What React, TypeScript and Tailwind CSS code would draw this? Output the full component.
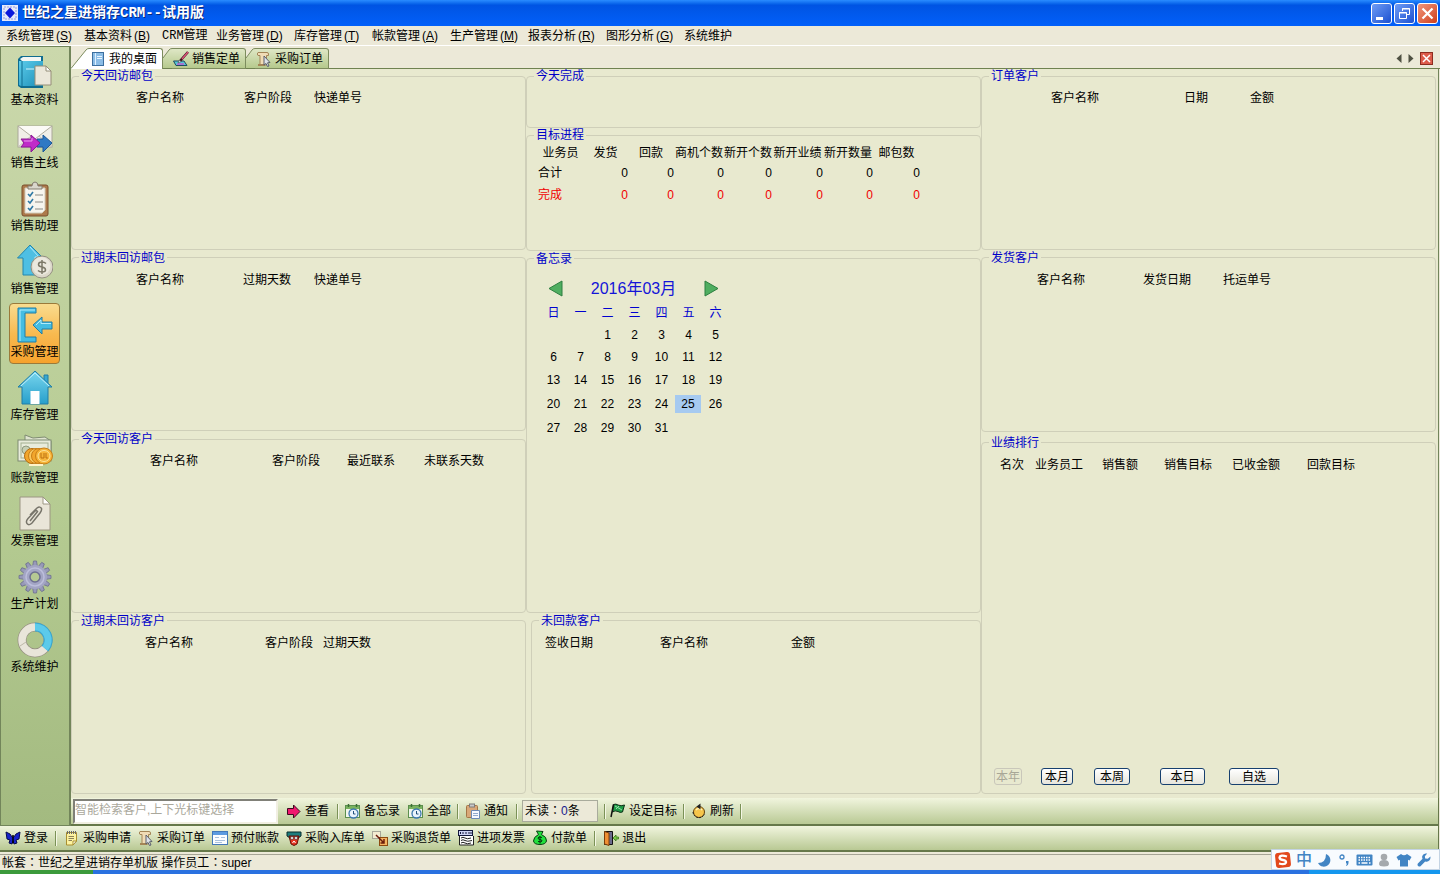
import React from "react";

type IconFn = () => React.ReactElement;

/* ---------- sidebar icons (36 x 36) ---------- */

const BookIcon: IconFn = () => (
  <svg viewBox="0 0 36 36" className="h-9 w-9" aria-hidden="true">
    <defs>
      <linearGradient id="bk" x1="0" y1="0" x2="1" y2="1">
        <stop offset="0" stopColor="#5ccbea" />
        <stop offset="1" stopColor="#1c8fb8" />
      </linearGradient>
    </defs>
    <path d="M1 4 L4 1 H26 V33 H4 L1 31 Z" fill="#0f6c8f" />
    <path d="M3 4 L6 2 H24 V6 H5 Z" fill="#f4f6f4" />
    <path d="M2 6 H26 V31 H4 L2 30 Z" fill="url(#bk)" />
    <path d="M5 6 V32" stroke="#0f6c8f" strokeWidth="1" />
    <path d="M9 14 H17" stroke="#d6f4fb" strokeWidth="1" />
    <path d="M18 11 H29 L34 16 V30 H18 Z" fill="#ebe7da" stroke="#958e79" strokeWidth="1" />
    <path d="M29 11 V16 H34 Z" fill="#fff" stroke="#958e79" strokeWidth="1" />
  </svg>
);

const MailIcon: IconFn = () => (
  <svg viewBox="0 0 36 36" className="h-9 w-9" aria-hidden="true">
    <rect x="1" y="8" width="34" height="21" fill="#f1efe8" stroke="#aaa79a" />
    <path d="M1 8 L18 21 L35 8" fill="#fbfaf6" stroke="#b0ad9f" />
    <path d="M1 29 L14 18 M35 29 L22 18" stroke="#c4c1b4" fill="none" />
    <path d="M20 21 H26 V17 L35 25 L26 34 V29 H20 Z" fill="#2e79c4" stroke="#1b5796" />
    <path d="M4 21 H14 V17 L23 25 L14 34 V29 H4 L7 25 Z" fill="#c02bc9" stroke="#8a1a93" />
    <path d="M7 23 H15 V20" stroke="#ea9cee" fill="none" />
  </svg>
);

const ChecklistIcon: IconFn = () => (
  <svg viewBox="0 0 36 36" className="h-9 w-9" aria-hidden="true">
    <rect x="5" y="4" width="26" height="31" rx="2" fill="#ad7a4c" stroke="#7a4f2c" />
    <path d="M8 7 H28 V29 L25 32 H8 Z" fill="#f7f5ee" stroke="#d3cdbb" />
    <path d="M11 8 V5 H15 Q15 1 18 1 Q21 1 21 5 H25 V8 Z" fill="#d9d6cc" stroke="#837e70" />
    <path d="M11 13 l2 2 l3 -4 M11 20 l2 2 l3 -4 M11 27 l2 2 l3 -4" stroke="#2e78a4" strokeWidth="1.6" fill="none" />
    <path d="M18 14 H26 M18 21 H26 M18 28 H26" stroke="#8b8b86" strokeWidth="1" />
  </svg>
);

const SalesIcon: IconFn = () => (
  <svg viewBox="0 0 36 36" className="h-9 w-9" aria-hidden="true">
    <path d="M13 1 L26 14 H20 V31 H6 V14 H0.5 Z" fill="#4ebfe3" stroke="#2386ae" />
    <path d="M13 3 L22 13 H18 V18" stroke="#b6ebf9" fill="none" />
    <circle cx="25" cy="23" r="11" fill="#dcd8ca" stroke="#938f80" />
    <circle cx="24.5" cy="22" r="9" fill="#ebe8de" />
    <path d="M29 19.500 Q27.500 18 25 18 Q21.500 18 21.500 20.500 Q21.500 22.500 25 23 Q28.500 23.500 28.500 26 Q28.500 28 25 28 Q22.500 28 21 26.500 M25 16 V30" fill="none" stroke="#7c7868" strokeWidth="1.500" />
  </svg>
);

const PurchaseIcon: IconFn = () => (
  <svg viewBox="0 0 36 36" className="h-9 w-9" aria-hidden="true">
    <path d="M1 1 H19 V6 H8 V30 H19 V35 H1 Z" fill="#45bde2" stroke="#207da6" />
    <path d="M3 34 V3 H18" stroke="#b4ecfa" fill="none" />
    <path d="M16 18 L25 10 V15 H35 V22 H25 V27 Z" fill="#45bde2" stroke="#207da6" />
    <path d="M19 18 L24 13 V16.500 H34" stroke="#b4ecfa" fill="none" />
  </svg>
);

const HouseIcon: IconFn = () => (
  <svg viewBox="0 0 36 36" className="h-9 w-9" aria-hidden="true">
    <defs>
      <linearGradient id="hs" x1="0" y1="0" x2="0" y2="1">
        <stop offset="0" stopColor="#79d6ee" />
        <stop offset="1" stopColor="#279fcb" />
      </linearGradient>
    </defs>
    <path d="M27 5 H31 V13 H27 Z" fill="#38a9d1" stroke="#207da6" />
    <path d="M18 1 L35 17 H31 V34 H5 V17 H1 Z" fill="url(#hs)" stroke="#207da6" />
    <path d="M4 16 L18 3 L32 16" stroke="#c1f0fb" fill="none" />
    <rect x="13.500" y="21" width="9" height="13" fill="#fff" />
  </svg>
);

const MoneyIcon: IconFn = () => (
  <svg viewBox="0 0 36 36" className="h-9 w-9" aria-hidden="true">
    <path d="M8 2 L16 5 L28 4 L34 8 V20 L8 18 Z" fill="#dfe4d0" stroke="#7f8b72" />
    <rect x="1" y="7" width="33" height="21" fill="#e8ecdb" stroke="#7f8b72" />
    <rect x="4" y="10" width="27" height="15" fill="none" stroke="#a3af92" />
    <circle cx="9" cy="17" r="4" fill="#c6cfb4" stroke="#8e9b80" />
    <circle cx="15" cy="23" r="7.500" fill="#f2a62c" stroke="#b76d0e" />
    <circle cx="19" cy="23" r="7.500" fill="#f8c860" stroke="#c87e16" />
    <circle cx="22" cy="23" r="7.500" fill="#f2a62c" stroke="#c87e16" />
    <ellipse cx="27" cy="23" rx="8.500" ry="8" fill="#f6b53a" stroke="#c87e16" />
    <ellipse cx="27" cy="23" rx="6" ry="5.500" fill="none" stroke="#fde39a" />
    <path d="M24 20 V25 H27 V20 M29 20 V25 H31" stroke="#bd7010" fill="none" />
    <path d="M12 32 H26" stroke="#fff3c8" strokeWidth="2" />
  </svg>
);

const InvoiceIcon: IconFn = () => (
  <svg viewBox="0 0 36 36" className="h-9 w-9" aria-hidden="true">
    <path d="M3 1 H26 L33 8 V34 H3 Z" fill="#e9e5d8" stroke="#9c9682" />
    <path d="M26 1 V8 H33 Z" fill="#fff" stroke="#9c9682" />
    <path d="M13 19 L20 12 Q23 10 24.500 12.500 Q25 14 23 17 L15 27 Q12 30 10 27.500 Q8.500 25.500 11 22.500 L18 15 Q20 14 20.500 15.500 L13 25" fill="none" stroke="#77746a" strokeWidth="1.500" />
  </svg>
);

const GEAR_ANGLES = [0, 30, 60, 90, 120, 150, 180, 210, 240, 270, 300, 330];

const GearIcon: IconFn = () => (
  <svg viewBox="0 0 36 36" className="h-9 w-9" aria-hidden="true">
    {GEAR_ANGLES.map((a) => (
      <path key={a} d="M15.500 8 L16.500 2 H19.500 L20.500 8 Z" fill="#9799b8" stroke="#6d6f90" strokeWidth="0.800" transform={`rotate(${a} 18 18)`} />
    ))}
    <circle cx="18" cy="18" r="12" fill="#a3a5c4" />
    <circle cx="18" cy="18" r="9" fill="none" stroke="#bcbedb" strokeWidth="1.500" />
    <circle cx="18" cy="18" r="5" fill="#b5c893" stroke="#6d6f90" strokeWidth="1.500" />
  </svg>
);

const RingIcon: IconFn = () => (
  <svg viewBox="0 0 36 36" className="h-9 w-9" aria-hidden="true">
    <circle cx="18" cy="18" r="13" fill="none" stroke="#979283" strokeWidth="9" />
    <circle cx="18" cy="18" r="13" fill="none" stroke="#e9e5da" strokeWidth="7.500" />
    <path d="M18 5 A13 13 0 0 1 28 26.500" fill="none" stroke="#37a7d0" strokeWidth="9" />
    <path d="M18 5 A13 13 0 0 1 28 26.500" fill="none" stroke="#5ccaea" strokeWidth="7" />
    <path d="M3 24 L9 20" stroke="#bdb8a8" />
  </svg>
);

/* ---------- toolbar icons (16 x 16) ---------- */

const cls16 = "h-4 w-4 shrink-0";

const ArrowRight16: IconFn = () => (
  <svg viewBox="0 0 16 16" className={cls16} aria-hidden="true">
    <path d="M1.500 5.500 H7.500 V2 L14 8.500 L7.500 15 V11.500 H1.500 Z" fill="#f0186e" stroke="#3c0a20" />
  </svg>
);
const CalClock16: IconFn = () => (
  <svg viewBox="0 0 16 16" className={cls16} aria-hidden="true">
    <rect x="0.500" y="2.500" width="14" height="12" fill="#f3f7ee" stroke="#5c8f4e" />
    <rect x="1" y="3" width="13" height="3" fill="#7ab35f" />
    <path d="M3.500 1 V4 M11.500 1 V4" stroke="#3b6e33" strokeWidth="1.500" />
    <circle cx="8.500" cy="10.500" r="4.500" fill="#eaf4fd" stroke="#3b76ad" strokeWidth="1.300" />
    <path d="M8.500 8 V11 H10.500" stroke="#23507c" fill="none" />
  </svg>
);
const Paste16: IconFn = () => (
  <svg viewBox="0 0 16 16" className={cls16} aria-hidden="true">
    <rect x="1.500" y="2.500" width="11" height="12" rx="1" fill="#d9a878" stroke="#a37546" />
    <rect x="4.500" y="1" width="5" height="3" fill="#c9c9c9" stroke="#7d7d7d" />
    <path d="M6.500 7.500 H14.500 V15.500 H6.500 Z" fill="#f5f9ff" stroke="#6b8ab5" />
    <path d="M8 10.500 H13 M8 12.500 H13" stroke="#8fa9cc" />
  </svg>
);
const Flag16: IconFn = () => (
  <svg viewBox="0 0 16 16" className={cls16} aria-hidden="true">
    <path d="M3.500 1.500 Q6 0.500 8 2 Q11 3.500 14.500 2 L12.500 9 Q10 10 8 8.500 Q5 7 2.500 9 Z" fill="#1f9c46" stroke="#0a2e14" />
    <path d="M5 3 L12 7 M6 6 L9 3" stroke="#8fe0a5" />
    <path d="M3.500 1.500 L1 14" stroke="#111" strokeWidth="1.500" />
  </svg>
);
const Refresh16: IconFn = () => (
  <svg viewBox="0 0 16 16" className={cls16} aria-hidden="true">
    <circle cx="8" cy="9" r="5.500" fill="#f5c54b" stroke="#66420a" />
    <path d="M5 7 Q8 4 11 7" stroke="#fff2b8" fill="none" strokeWidth="1.500" />
    <path d="M5.500 3.500 L9.500 0.500 V6.500 Z" fill="#222" />
    <path d="M2 9 A6 6 0 0 0 13.500 11" fill="none" stroke="#222" strokeDasharray="2 1" />
  </svg>
);
const Butterfly16: IconFn = () => (
  <svg viewBox="0 0 16 16" className={cls16} aria-hidden="true">
    <path d="M1 2 L5 4 L7 7 H9 L11 4 L15 2 L14 9 L11 10 L12 13 L9 14 L8 11 L7 14 L4 13 L5 10 L2 9 Z" fill="#1722c9" stroke="#070b4e" />
    <path d="M8 5 V13" stroke="#000" strokeWidth="1.500" />
  </svg>
);
const Note16: IconFn = () => (
  <svg viewBox="0 0 16 16" className={cls16} aria-hidden="true">
    <path d="M2.500 2.500 H12.500 V11 L9 15 H2.500 Z" fill="#fdf3a0" stroke="#a98f2f" />
    <path d="M4.500 6.500 H10 M4.500 8.500 H10 M4.500 10.500 H8" stroke="#8c8258" />
    <path d="M3.500 1 V4 M5.500 1 V4 M7.500 1 V4 M9.500 1 V4 M11.500 1 V4" stroke="#6b6b6b" />
    <path d="M9 15 V11 H12.500 Z" fill="#fff" stroke="#a98f2f" />
  </svg>
);
const ScrollCursor16: IconFn = () => (
  <svg viewBox="0 0 16 16" className={cls16} aria-hidden="true">
    <path d="M2 1.500 H11 Q12.500 1.500 12.500 3 V4.500 H10.500 V14 H4 V4.500 H2 Q0.500 3 2 1.500 Z" fill="#f0dcb6" stroke="#a48556" />
    <path d="M2 14 H9" stroke="#a48556" strokeWidth="2" />
    <path d="M8 5 L14 11.500 L11.500 11.800 L13 15 L11.500 15.500 L10 12.500 L8 14 Z" fill="#dfe3ea" stroke="#5a5f6a" />
  </svg>
);
const Form16: IconFn = () => (
  <svg viewBox="0 0 16 16" className={cls16} aria-hidden="true">
    <rect x="0.500" y="1.500" width="15" height="13" fill="#fbfdff" stroke="#4379b8" />
    <rect x="1" y="2" width="14" height="3" fill="#5c9be0" />
    <path d="M3 7.500 H7 M9 7.500 H13 M3 10.500 H13 M3 12.500 H10" stroke="#a9c1dd" />
  </svg>
);
const Cart16: IconFn = () => (
  <svg viewBox="0 0 16 16" className={cls16} aria-hidden="true">
    <path d="M1 2 H15 V6 L12 8 H4 L1 6 Z" fill="#1e7d7d" stroke="#082c2c" />
    <path d="M3 6 H13 L11 14 L8 15.500 L5 14 Z" fill="#e3331f" stroke="#611007" />
    <circle cx="6" cy="8" r="1.500" fill="#fff" stroke="#222" strokeWidth="0.600" />
    <circle cx="10" cy="8" r="1.500" fill="#fff" stroke="#222" strokeWidth="0.600" />
    <path d="M6.500 13 L8 11 L9.500 13" stroke="#fff" fill="none" />
  </svg>
);
const Return16: IconFn = () => (
  <svg viewBox="0 0 16 16" className={cls16} aria-hidden="true">
    <rect x="0.500" y="1.500" width="8" height="7" fill="#f3ecd0" stroke="#666" strokeDasharray="1 1" />
    <rect x="7.500" y="7.500" width="8" height="8" fill="#f5b561" stroke="#8c4a10" />
    <path d="M4 5 L12 13 M12 9 V13 H8.500" stroke="#6b1c0a" strokeWidth="1.500" fill="none" />
  </svg>
);
const Stamp16: IconFn = () => (
  <svg viewBox="0 0 16 16" className={cls16} aria-hidden="true">
    <rect x="0.500" y="0.500" width="14" height="5" fill="#cfd4f5" stroke="#14183c" />
    <path d="M2.500 2 V4 M5 2 V4 M7 3 H9 M11 2 V4 M13 2 V4" stroke="#14183c" />
    <path d="M1.500 6 V15 H15.500 V6" fill="#fff" stroke="#222" />
    <path d="M3 8 Q5 6.500 7 8 T13 8 M3 10.500 Q5 9 7 10.500 T14 10.500 M3 13 Q5 11.500 7 13 T13 13" stroke="#222" fill="none" />
  </svg>
);
const MoneyBag16: IconFn = () => (
  <svg viewBox="0 0 16 16" className={cls16} aria-hidden="true">
    <path d="M4.500 1 L11 1.500 L9.500 4.500 Q15 7 14.500 11 Q13.500 14.500 8 14.500 Q2 14.500 1.500 11 Q1.500 7 6.500 4.500 Z" fill="#22e03c" stroke="#073f10" />
    <path d="M10 7.500 Q6 6 6 8 Q6 9.300 8 9.500 Q10.200 9.800 10 11 Q9.500 12.500 6 11.500 M8 6 V13.500" stroke="#06310c" fill="none" />
  </svg>
);
const Exit16: IconFn = () => (
  <svg viewBox="0 0 16 16" className={cls16} aria-hidden="true">
    <path d="M1.500 1.500 H9.500 V14.500 H1.500 Z" fill="#6a6a8c" stroke="#111" />
    <path d="M1.500 1.500 L6 3 V15.500 L1.500 14 Z" fill="#ef8f33" stroke="#7c3e09" />
    <path d="M10 8 L13 5 V7 H15.500 V9 H13 V11 Z" fill="#7cc94a" stroke="#3b7a1a" strokeWidth="0.800" />
  </svg>
);
const Notebook16: IconFn = () => (
  <svg viewBox="0 0 16 16" className={cls16} aria-hidden="true">
    <rect x="2.500" y="1.500" width="11" height="13" fill="#8cbde6" stroke="#3c6f9f" />
    <path d="M5.500 2 V14" stroke="#dff0ff" />
    <path d="M7 5.500 H12 M7 7.500 H12" stroke="#e9f5ff" />
  </svg>
);
const Pen16: IconFn = () => (
  <svg viewBox="0 0 16 16" className={cls16} aria-hidden="true">
    <path d="M0.500 10 H11 L14 14.500 H3 Z" fill="#56c6d6" stroke="#1f4a60" />
    <path d="M4 13 H11" stroke="#c05ad0" strokeWidth="1.500" />
    <path d="M15 1 L7 10" stroke="#40121f" strokeWidth="2.500" />
    <path d="M15 1 L9 8" stroke="#e0567a" strokeWidth="1.300" />
    <path d="M5 12 L8 10.500 L6.500 9 Z" fill="#fff" stroke="#333" strokeWidth="0.500" />
  </svg>
);

/* ---------- data ---------- */

const MENUS: { text: string; key?: string }[] = [
  { text: "系统管理", key: "S" },
  { text: "基本资料", key: "B" },
  { text: "CRM管理" },
  { text: "业务管理", key: "D" },
  { text: "库存管理", key: "T" },
  { text: "帐款管理", key: "A" },
  { text: "生产管理", key: "M" },
  { text: "报表分析", key: "R" },
  { text: "图形分析", key: "G" },
  { text: "系统维护" },
];

const MODULES: { text: string; Icon: IconFn; active?: boolean }[] = [
  { text: "基本资料", Icon: BookIcon },
  { text: "销售主线", Icon: MailIcon },
  { text: "销售助理", Icon: ChecklistIcon },
  { text: "销售管理", Icon: SalesIcon },
  { text: "采购管理", Icon: PurchaseIcon, active: true },
  { text: "库存管理", Icon: HouseIcon },
  { text: "账款管理", Icon: MoneyIcon },
  { text: "发票管理", Icon: InvoiceIcon },
  { text: "生产计划", Icon: GearIcon },
  { text: "系统维护", Icon: RingIcon },
];

const GOAL_COLS = [
  { text: "业务员", w: "w-[45px]" },
  { text: "发货", w: "w-[45px]" },
  { text: "回款", w: "w-[46px]" },
  { text: "商机个数", w: "w-[50px]" },
  { text: "新开个数", w: "w-[48px]" },
  { text: "新开业绩", w: "w-[51px]" },
  { text: "新开数量", w: "w-[50px]" },
  { text: "邮包数", w: "w-[47px]" },
];

const WEEKS: { h: string; days: (number | null)[] }[] = [
  { h: "h-[22px]", days: [null, null, 1, 2, 3, 4, 5] },
  { h: "h-[22px]", days: [6, 7, 8, 9, 10, 11, 12] },
  { h: "h-6", days: [13, 14, 15, 16, 17, 18, 19] },
  { h: "h-6", days: [20, 21, 22, 23, 24, 25, 26] },
  { h: "h-6", days: [27, 28, 29, 30, 31, null, null] },
];

const RANGES = [
  { text: "本年", c: "w-7 mr-[19px] border-[#c9c7ba] text-[#a8a797]", off: true },
  { text: "本月", c: "w-8 mr-[21px] border-[#17406f] bg-gradient-to-b from-white to-[#e6e5dc]" },
  { text: "本周", c: "w-9 mr-[30px] border-[#17406f] bg-gradient-to-b from-white to-[#e6e5dc]" },
  { text: "本日", c: "w-[45px] mr-6 border-[#17406f] bg-gradient-to-b from-white to-[#e6e5dc]" },
  { text: "自选", c: "w-[50px] border-[#17406f] bg-gradient-to-b from-white to-[#e6e5dc]" },
];

/* ---------- shared parts ---------- */

function Panel({ title, className, children }: { title: string; className: string; children?: React.ReactNode }) {
  return (
    <fieldset className={`min-w-0 rounded-[4px] border border-[#cfcfb9] ${className}`}>
      <legend className="ml-[7px] px-0.5 leading-[14px] text-[#0000c8]">{title}</legend>
      {children}
    </fieldset>
  );
}

/* Column heads; each entry is the text and the width class of its column. */
function HeadTable({ indent, cols }: { indent: string; cols: [string, string][] }) {
  return (
    <div className={indent}>
      <table className="table-fixed border-collapse whitespace-nowrap">
        <thead>
          <tr className="h-[30px]">
            {cols.map(([text, w]) => (
              <th key={text} scope="col" className={`p-0 text-left font-normal ${w}`}>{text}</th>
            ))}
          </tr>
        </thead>
      </table>
    </div>
  );
}

function Tool({ text, Icon }: { text: string; Icon: IconFn }) {
  return (
    <button type="button" className="flex shrink-0 items-center gap-[3px] whitespace-nowrap">
      <Icon />
      {text}
    </button>
  );
}

function Sep({ className = "" }: { className?: string }) {
  return <span className={`h-[15px] w-0.5 shrink-0 border-l border-r border-l-[#7b9157] border-r-[#f4f7e4] ${className}`} />;
}

/* Full-width colon with its dots in the middle of the cell. */
function Colon() {
  return <span className="font-['Noto_Sans_CJK_TC',sans-serif] leading-none" lang="zh-TW">：</span>;
}

function Tab({ text, Icon, active }: { text: string; Icon: IconFn; active?: boolean }) {
  return (
    <button type="button" role="tab" aria-selected={!!active} className="flex h-[21px] items-stretch whitespace-nowrap">
      {active ? (
        <svg viewBox="0 0 18 21" className="h-[21px] w-[18px]" aria-hidden="true">
          <path d="M0 20.500 L15 2 Q16 0.500 18 0.500 V21 H0 Z" fill="#fff" />
          <path d="M0 20.500 L15 2 Q16 0.500 18 0.500" fill="none" stroke="#7d8c5e" />
        </svg>
      ) : (
        <svg viewBox="0 0 9 21" className="h-[21px] w-[9px]" aria-hidden="true">
          <defs>
            <linearGradient id="slant" x1="0" y1="0" x2="0" y2="1">
              <stop offset="0" stopColor="#dfe7c6" />
              <stop offset="1" stopColor="#b5c98c" />
            </linearGradient>
          </defs>
          <path d="M0 10 L6 2 Q7 0.500 9 0.500 V20.500 H0 Z" fill="url(#slant)" />
          <path d="M0 10 L6 2 Q7 0.500 9 0.500" fill="none" stroke="#7d8c5e" />
          <path d="M0 20.500 H9" stroke="#6f8250" />
        </svg>
      )}
      <span
        className={
          active
            ? "flex items-center gap-[3px] rounded-tr-[3px] border-t border-r border-[#7d8c5e] bg-white pr-[5px] pl-px"
            : "flex items-center gap-[3px] rounded-tr-[3px] border-t border-r border-b border-[#7d8c5e] bg-gradient-to-b from-[#dfe7c6] to-[#b5c98c] pr-[5px] pl-px"
        }
      >
        <Icon />
        {text}
      </span>
    </button>
  );
}

const CAPTION_BTN = "flex h-[21px] w-[21px] items-center justify-center rounded-[3px] border border-white";

/* ---------- page ---------- */

export default function App() {
  return (
    <div className="relative flex min-h-screen flex-col overflow-hidden bg-[#ece9d8] font-['Liberation_Sans','Noto_Sans_CJK_SC',sans-serif] text-xs leading-4 text-black">
      <header className="flex h-[26px] items-center gap-[3px] bg-gradient-to-b from-[#2a8cff] via-[#0054e3] via-20% to-[#0260fa] pr-0.5 pl-0.5">
        <svg viewBox="0 0 16 16" className="h-4 w-4" aria-hidden="true">
          <rect width="16" height="16" fill="#e4e9fa" />
          <path d="M2 2 H14 V14 H2 Z" fill="none" stroke="#8f9be0" strokeDasharray="2 1" />
          <path d="M8 2.500 L13 8 L8 13.500 L3 8 Z" fill="#0a18dc" />
        </svg>
        <h1 className="ml-px flex-1 font-['Liberation_Mono','Noto_Sans_CJK_SC',sans-serif] text-sm font-bold whitespace-nowrap text-white [text-shadow:1px_1px_0_#0a2a80]">
          世纪之星进销存CRM--试用版
        </h1>
        <div className="flex gap-0.5">
          <button type="button" aria-label="最小化" className={`${CAPTION_BTN} bg-gradient-to-br from-[#6f9cf5] to-[#1c4fd0]`}>
            <svg viewBox="0 0 19 19" className="h-[19px] w-[19px]"><path d="M4 14.500 H11" stroke="#fff" strokeWidth="3" /></svg>
          </button>
          <button type="button" aria-label="还原" className={`${CAPTION_BTN} bg-gradient-to-br from-[#6f9cf5] to-[#1c4fd0]`}>
            <svg viewBox="0 0 19 19" className="h-[19px] w-[19px]" fill="none" stroke="#fff">
              <path d="M7.500 7 V4.500 H14.500 V10.500 H12 M7 5 H15" />
              <path d="M4.500 8.500 H11.500 V14.500 H4.500 Z M4 9 H12" />
            </svg>
          </button>
          <button type="button" aria-label="关闭" className={`${CAPTION_BTN} bg-gradient-to-br from-[#f0957a] to-[#cf3c14]`}>
            <svg viewBox="0 0 19 19" className="h-[19px] w-[19px]"><path d="M4.500 4.500 L14.500 14.500 M14.500 4.500 L4.500 14.500" stroke="#fff" strokeWidth="2.200" /></svg>
          </button>
        </div>
      </header>

      <nav className="flex h-5 items-center border-b border-white pl-1.5">
        {MENUS.map((m) =>
          m.text === "CRM管理" ? (
            <button key={m.text} type="button" className="w-[54px] text-left font-['Liberation_Mono','Noto_Sans_CJK_SC',monospace] whitespace-nowrap">
              {m.text}
            </button>
          ) : (
            <button key={m.text} type="button" className="w-[78px] text-left whitespace-nowrap">
              {m.text}
              {m.key && <span className="ml-0.5">(<u>{m.key}</u>)</span>}
            </button>
          ),
        )}
      </nav>

      <div className="flex flex-1">
        <aside className="flex w-[71px] shrink-0 flex-col items-center gap-0.5 border border-r-2 border-[#72855a] bg-gradient-to-b from-[#cbd8ac] via-[#b5cb92] via-60% to-[#a3ba80] pt-1 pr-px">
          {MODULES.map(({ text, Icon, active }) => (
            <button
              key={text}
              type="button"
              className={
                active
                  ? "flex h-[61px] w-[51px] flex-col items-center gap-px rounded-[4px] border border-[#9a7a3a] bg-gradient-to-b from-[#f9dc8e] via-[#f8ba50] to-[#f6a22c] pt-[3px] whitespace-nowrap"
                  : "flex h-[61px] w-[51px] flex-col items-center gap-px pt-1 whitespace-nowrap"
              }
            >
              <Icon />
              {text}
            </button>
          ))}
        </aside>

        <main className="flex min-w-0 flex-1 flex-col">
          <div className="flex items-end pt-0.5" role="tablist">
            <Tab text="我的桌面" Icon={Notebook16} active />
            <Tab text="销售定单" Icon={Pen16} />
            <Tab text="采购订单" Icon={ScrollCursor16} />
            <div className="flex h-[21px] flex-1 items-center justify-end gap-1.5 border-b border-[#6f8250] pr-[7px]">
              <button type="button" aria-label="上一页">
                <svg viewBox="0 0 6 9" className="h-[9px] w-1.5"><path d="M5.500 0 V9 L0.500 4.500 Z" fill="#4f5042" /></svg>
              </button>
              <button type="button" aria-label="下一页">
                <svg viewBox="0 0 6 9" className="h-[9px] w-1.5"><path d="M0.500 0 V9 L5.500 4.500 Z" fill="#4f5042" /></svg>
              </button>
              <button type="button" aria-label="关闭标签" className="flex h-[13px] w-[13px] items-center justify-center border border-[#8d2c20] bg-[#dc5b4a]">
                <svg viewBox="0 0 9 9" className="h-[9px] w-[9px]"><path d="M1 1 L8 8 M8 1 L1 8" stroke="#fff" strokeWidth="1.500" /></svg>
              </button>
            </div>
          </div>

          <div className="mr-px grid flex-1 grid-cols-3 border-r border-[#72855a] bg-[#e8e9cf] pr-0.5 pb-1">
            <div className="flex flex-col gap-px">
              <Panel title="今天回访邮包" className="flex-1">
                <HeadTable indent="pl-16" cols={[["客户名称", "w-[108px]"], ["客户阶段", "w-[70px]"], ["快递单号", "w-[60px]"]]} />
              </Panel>
              <Panel title="过期未回访邮包" className="flex-1">
                <HeadTable indent="pl-16" cols={[["客户名称", "w-[107px]"], ["过期天数", "w-[71px]"], ["快递单号", "w-[60px]"]]} />
              </Panel>
              <Panel title="今天回访客户" className="flex-1">
                <HeadTable indent="pl-[78px]" cols={[["客户名称", "w-[122px]"], ["客户阶段", "w-[75px]"], ["最近联系", "w-[77px]"], ["未联系天数", "w-[60px]"]]} />
              </Panel>
              <Panel title="过期未回访客户" className="flex-1">
                <HeadTable indent="pl-[73px]" cols={[["客户名称", "w-[120px]"], ["客户阶段", "w-[58px]"], ["过期天数", "w-[60px]"]]} />
              </Panel>
            </div>

            <div className="flex flex-col">
              <Panel title="今天完成" className="flex-[58]" />
              <Panel title="目标进程" className="mb-px flex-[122]">
                <table className="ml-[11px] w-[382px] table-fixed border-collapse whitespace-nowrap">
                  <thead>
                    <tr className="h-[21px]">
                      {GOAL_COLS.map((c) => (
                        <th key={c.text} scope="col" className={`p-0 text-center font-normal ${c.w}`}>{c.text}</th>
                      ))}
                    </tr>
                  </thead>
                  <tbody>
                    <tr className="h-5">
                      <th scope="row" className="p-0 text-left font-normal">合计</th>
                      {GOAL_COLS.slice(1).map((c) => <td key={c.text} className="p-0 text-right">0</td>)}
                    </tr>
                    <tr className="h-6 text-[#f00000]">
                      <th scope="row" className="p-0 text-left font-normal">完成</th>
                      {GOAL_COLS.slice(1).map((c) => <td key={c.text} className="p-0 text-right">0</td>)}
                    </tr>
                  </tbody>
                </table>
              </Panel>
              <Panel title="备忘录" className="mb-px flex-[364]">
                <div className="ml-[13px] w-[189px]">
                  <div className="flex h-9 items-center justify-between pt-2.5 pr-2.5 pl-2">
                    <button type="button" aria-label="上个月">
                      <svg viewBox="0 0 15 17" className="h-[17px] w-[15px]"><path d="M14 1 V16 L1 8.500 Z" fill="#4fae60" stroke="#2d7f40" /></svg>
                    </button>
                    <span className="text-base leading-5 text-[#1414d8]">2016年03月</span>
                    <button type="button" aria-label="下个月">
                      <svg viewBox="0 0 15 17" className="h-[17px] w-[15px]"><path d="M1 1 V16 L14 8.500 Z" fill="#4fae60" stroke="#2d7f40" /></svg>
                    </button>
                  </div>
                  <table className="w-full table-fixed border-collapse text-center">
                    <thead>
                      <tr className="h-[22px] text-[#0000d0]">
                        {["日", "一", "二", "三", "四", "五", "六"].map((d) => (
                          <th key={d} scope="col" className="p-0 font-normal">{d}</th>
                        ))}
                      </tr>
                    </thead>
                    <tbody>
                      {WEEKS.map((w, i) => (
                        <tr key={i} className={w.h}>
                          {w.days.map((d, j) => (
                            <td key={j} className="p-0">
                              {d === 25 ? <span className="block h-[18px] w-[26px] bg-[#a6caf0] leading-[18px]">25</span> : d}
                            </td>
                          ))}
                        </tr>
                      ))}
                    </tbody>
                  </table>
                </div>
              </Panel>
              <Panel title="未回款客户" className="ml-[5px] flex-[181]">
                <HeadTable indent="pl-[13px]" cols={[["签收日期", "w-[115px]"], ["客户名称", "w-[131px]"], ["金额", "w-[60px]"]]} />
              </Panel>
            </div>

            <div className="flex flex-col">
              <Panel title="订单客户" className="mb-px flex-[180]">
                <HeadTable indent="pl-[69px]" cols={[["客户名称", "w-[133px]"], ["日期", "w-[66px]"], ["金额", "w-[60px]"]]} />
              </Panel>
              <Panel title="发货客户" className="mb-1 flex-[181]">
                <HeadTable indent="pl-[55px]" cols={[["客户名称", "w-[106px]"], ["发货日期", "w-[80px]"], ["托运单号", "w-[60px]"]]} />
              </Panel>
              <Panel title="业绩排行" className="flex-[359]">
                <div className="flex h-full flex-col justify-between pb-2">
                  <HeadTable
                    indent="pl-[18px]"
                    cols={[["名次", "w-[35px]"], ["业务员工", "w-[67px]"], ["销售额", "w-[62px]"], ["销售目标", "w-[68px]"], ["已收金额", "w-[75px]"], ["回款目标", "w-[60px]"]]}
                  />
                  <div className="flex pl-3">
                    {RANGES.map((r) => (
                      <button key={r.text} type="button" disabled={r.off} className={`flex h-[17px] items-center justify-center rounded-[3px] border whitespace-nowrap ${r.c}`}>
                        {r.text}
                      </button>
                    ))}
                  </div>
                </div>
              </Panel>
            </div>
          </div>

          <div className="mr-px flex h-7 items-center border-r border-b-2 border-[#66784a] bg-gradient-to-b from-[#f1f5de] to-[#b9c994] pl-0.5">
            <input
              aria-label="智能检索客户"
              placeholder="智能检索客户,上下光标键选择"
              className="mr-2 h-[25px] w-[205px] shrink-0 rounded-none border-2 border-t-[#808078] border-r-[#f1efe2] border-b-[#f1efe2] border-l-[#808078] bg-white pb-0.5 outline-none placeholder:text-[#aaa89c]"
            />
            <Tool text="查看" Icon={ArrowRight16} />
            <Sep className="mr-1.5 ml-2" />
            <Tool text="备忘录" Icon={CalClock16} />
            <span className="w-2" />
            <Tool text="全部" Icon={CalClock16} />
            <Sep className="mx-1.5" />
            <Tool text="通知" Icon={Paste16} />
            <Sep className="mr-1 ml-2" />
            <output className="h-[22px] w-[76px] border border-[#a9ab9c] bg-[#ece9d8] pl-0.5 leading-5 whitespace-nowrap">
              未读<Colon /><span className="text-[#20208c]">0</span>条
            </output>
            <Sep className="mr-1 ml-1.5" />
            <Tool text="设定目标" Icon={Flag16} />
            <Sep className="mx-1.5" />
            <Tool text="刷新" Icon={Refresh16} />
            <Sep className="ml-1.5" />
          </div>
        </main>
      </div>

      <div className="mr-px flex h-[26px] items-center gap-[7px] border-r border-b-2 border-[#66784a] bg-gradient-to-b from-[#f1f5de] to-[#b9c994] pl-[5px]">
        <Tool text="登录" Icon={Butterfly16} />
        <Sep />
        <Tool text="采购申请" Icon={Note16} />
        <Tool text="采购订单" Icon={ScrollCursor16} />
        <Tool text="预付账款" Icon={Form16} />
        <Tool text="采购入库单" Icon={Cart16} />
        <Tool text="采购退货单" Icon={Return16} />
        <Tool text="进项发票" Icon={Stamp16} />
        <Tool text="付款单" Icon={MoneyBag16} />
        <Sep />
        <Tool text="退出" Icon={Exit16} />
      </div>

      <footer>
        <p className="mt-0.5 h-4 border-t border-[#a5a394] pl-0.5 whitespace-nowrap">帐套<Colon />世纪之星进销存单机版 操作员工<Colon />super</p>
        <div className="flex h-1">
          <span className="w-[93px] bg-[#3c9a3c]" />
          <span className="flex-1 bg-[#2a71e0]" />
          <span className="w-[131px] bg-[#1597ee]" />
        </div>
      </footer>

      <div className="absolute right-0 bottom-1 flex h-[21px] w-[169px] items-center border border-[#c4d4e4] bg-[#f8fbfe] text-[#4285c4]">
        <span className="flex w-[22px] justify-center">
          <svg viewBox="0 0 18 18" className="h-[18px] w-[18px]" aria-hidden="true">
            <rect x="1.500" y="1.500" width="15" height="15" rx="3" fill="#e2481c" transform="rotate(-6 9 9)" />
            <path d="M13 5.500 Q6 3.500 5.500 6.500 Q5.500 8.500 9 9 Q12.500 9.500 12 11.500 Q11 14 5 12.500" fill="none" stroke="#fff" strokeWidth="2.300" />
          </svg>
        </span>
        <span className="w-5 text-center text-base leading-4 font-medium">中</span>
        <span className="flex w-5 justify-center">
          <svg viewBox="0 0 14 14" className="h-3.5 w-3.5" aria-hidden="true"><path d="M9 1 A6.500 6.500 0 1 1 1 10 Q9 10 9 1 Z" fill="currentColor" /></svg>
        </span>
        <span className="flex w-5 justify-center">
          <svg viewBox="0 0 14 14" className="h-3.5 w-3.5" aria-hidden="true">
            <circle cx="5" cy="4" r="2" fill="none" stroke="currentColor" strokeWidth="1.300" />
            <path d="M9 8 H11.500 V10 Q11.500 12 9.500 13 L9 12 Q10 11.500 10 10.500 H9 Z" fill="currentColor" />
          </svg>
        </span>
        <span className="flex w-5 justify-center">
          <svg viewBox="0 0 17 12" className="h-3 w-[17px]" aria-hidden="true">
            <rect x="0.500" y="0.500" width="16" height="11" rx="1" fill="currentColor" />
            <path d="M2.500 3.500 H15 M2.500 6 H15" stroke="#fff" strokeWidth="1.500" strokeDasharray="1.500 1" />
            <path d="M2.500 9 H4 M5.500 9 H11.500 M13 9 H14.500" stroke="#fff" strokeWidth="1.500" />
          </svg>
        </span>
        <span className="flex w-5 justify-center text-[#a5a9ad]">
          <svg viewBox="0 0 12 14" className="h-3.5 w-3" aria-hidden="true">
            <circle cx="6" cy="4" r="3.300" fill="currentColor" />
            <path d="M1 11 Q1 7 6 7 Q11 7 11 11 Q11 13.500 6 13.500 Q1 13.500 1 11 Z" fill="currentColor" />
          </svg>
        </span>
        <span className="flex w-5 justify-center">
          <svg viewBox="0 0 16 14" className="h-3.5 w-4" aria-hidden="true"><path d="M5 1 Q8 3.500 11 1 L15.500 4 L13.500 7.500 L12 6.800 V13.500 H4 V6.800 L2.500 7.500 L0.500 4 Z" fill="currentColor" /></svg>
        </span>
        <span className="flex w-5 justify-center">
          <svg viewBox="0 0 24 24" className="h-3.5 w-3.5" aria-hidden="true"><path d="M23 6 L18.500 10 L14 9.500 L13.500 5.500 L17.500 1 Q11 -0.500 9 5 Q8.500 7.500 9.500 10 L1.500 18 Q0 20.500 2 22.300 Q4 24 6 22.500 L14 14.500 Q18.500 16 21.500 12.500 Q23.500 10 23 6 Z" fill="currentColor" /></svg>
        </span>
      </div>
    </div>
  );
}
